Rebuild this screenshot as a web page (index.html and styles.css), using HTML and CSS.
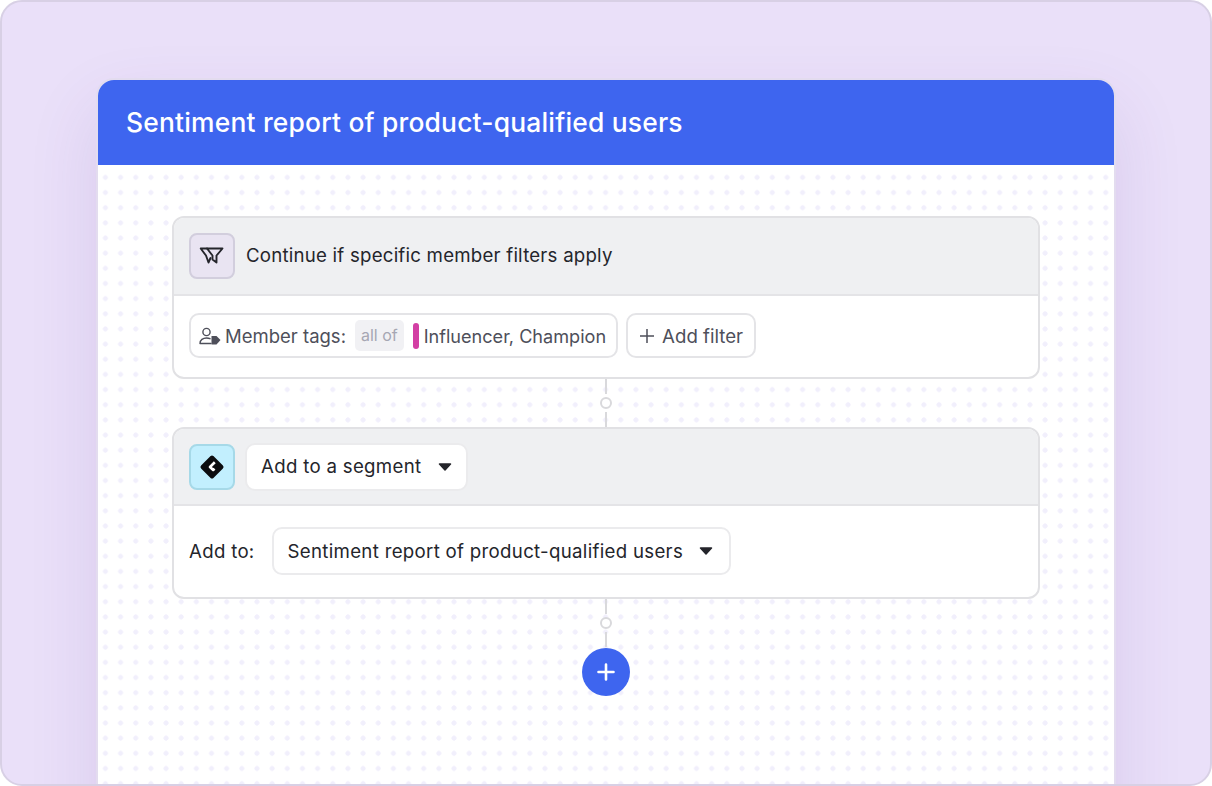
FILE: index.html
```html
<!DOCTYPE html>
<html lang="en">
<head>
<meta charset="utf-8">
<title>Sentiment report</title>
<link rel="stylesheet" href="styles.css">
</head>
<body>
<div class="frame">
  <div class="card">
    <div class="card-title">Sentiment report of product-qualified users</div>
    <div class="canvas">
      <section class="step">
        <div class="step-head">
          <span class="icon-box icon-filter">
            <svg width="26" height="20" viewBox="0 0 26 20" fill="none" stroke="#24252b" stroke-width="1.900" stroke-linejoin="round" stroke-linecap="round"><path d="M8 2.500H23.500L17.500 9.500V16.500L13.500 13.500V9.500Z"/><path d="M8 2.500H1.700L7 9.500L9.500 16.500L11.500 12"/></svg>
          </span>
          <span class="head-text">Continue if specific member filters apply</span>
        </div>
        <div class="step-body body-filter">
          <div class="pill pill-tags">
            <svg class="member-icon" width="22" height="20" viewBox="0 0 22 20" fill="none" stroke="#4e4f5a" stroke-width="1.400"><circle cx="7.500" cy="6" r="3.600"/><path d="M1 17.500C1 13.800 4 12 7.500 12C8.800 12 10 12.200 11 12.700M1 17.500H12" stroke-linecap="round"/><path d="M12.500 10H17.500L21.500 14L17.500 18.500H12.500Z" fill="#4e4f5a" stroke="none"/></svg>
            <span class="tags-label">Member tags:</span>
            <span class="all-of">all of</span>
            <span class="tag-bar"></span>
            <span class="tag-value">Influencer, Champion</span>
          </div>
          <div class="pill pill-add">
            <svg width="16" height="16" viewBox="0 0 16 16" stroke="#4e4f5a" stroke-width="1.500" fill="none"><path d="M8 1V15M1 8H15"/></svg>
            <span class="add-filter">Add filter</span>
          </div>
        </div>
      </section>
      <div class="connector"><span class="line"></span><span class="node"></span><span class="line"></span></div>
      <section class="step">
        <div class="step-head head-action">
          <span class="icon-box icon-segment">
            <svg width="26" height="26" viewBox="0 0 26 26"><path d="M13 3.500L22.500 13L13 22.500L3.500 13Z" fill="#0c0d10" stroke="#0c0d10" stroke-width="4" stroke-linejoin="round"/><path d="M15.800 8.300L11 13L14.200 16L15.500 14.700" fill="none" stroke="#fff" stroke-width="2.600" stroke-linejoin="round"/></svg>
          </span>
          <div class="select select-action">
            <span>Add to a segment</span>
            <svg class="caret" width="14" height="8" viewBox="0 0 14 8"><path d="M1.500 1H12.500L7 7Z" fill="#24252b" stroke="#24252b" stroke-width="1.500" stroke-linejoin="round"/></svg>
          </div>
        </div>
        <div class="step-body body-action">
          <span class="add-label">Add to:</span>
          <div class="select select-target">
            <span>Sentiment report of product-qualified users</span>
            <svg class="caret" width="14" height="8" viewBox="0 0 14 8"><path d="M1.500 1H12.500L7 7Z" fill="#24252b" stroke="#24252b" stroke-width="1.500" stroke-linejoin="round"/></svg>
          </div>
        </div>
      </section>
      <div class="connector connector-end"><span class="line"></span><span class="node"></span><span class="line"></span></div>
      <div class="add-btn">
        <svg width="18" height="18" viewBox="0 0 18 18" stroke="#fff" stroke-width="2.600" stroke-linecap="round"><path d="M9 1.500V16.500M1.500 9H16.500"/></svg>
      </div>
    </div>
  </div>
</div>
</body>
</html>
```
FILE: styles.css
```css
* { box-sizing: border-box; }
html, body { margin: 0; padding: 0; }
body {
  font-family: Inter, "Liberation Sans", sans-serif;
  background: #fff;
}
.frame {
  width: 1212px;
  height: 786px;
  overflow: hidden;
  background: #eae0f9;
  border: 2px solid #d8d0e5;
  border-radius: 22px;
  padding: 76px 94px 0 94px;
}
.card {
  width: 1020px;
  height: 760px;
  background: #fff;
  border: 2px solid #e3dcef;
  border-bottom: 0;
  border-radius: 18px 18px 0 0;
  box-shadow: 0 30px 70px rgba(90, 50, 150, .12);
  overflow: hidden;
}
.card-title {
  height: 85px;
  background: #3e65ef;
  color: #fff;
  font-size: 26.400px;
  font-weight: 550;
  letter-spacing: .2px;
  line-height: 85px;
  padding-left: 28px;
}
.canvas {
  height: 680px;
  padding: 51px 74px 0;
  display: flex;
  flex-direction: column;
  align-items: stretch;
  background-image: radial-gradient(circle, #f1effc 2.200px, transparent 2.800px);
  background-size: 15.160px 15.160px;
  background-position: -0.200px 4.800px;
  background-color: #fff;
}
.step {
  background: #fff;
  border: 2px solid #e1e1e4;
  border-radius: 12px;
  overflow: hidden;
}
.step-head {
  display: flex;
  align-items: center;
  gap: 11px;
  height: 78px;
  padding: 0 15px;
  background: #eff0f2;
  border-bottom: 2px solid #e4e4e7;
}
.icon-box {
  width: 46px;
  height: 46px;
  border-radius: 8px;
  display: flex;
  align-items: center;
  justify-content: center;
  flex: none;
}
.icon-filter { background: #e9e4f2; border: 2px solid #d2cedd; }
.icon-segment { background: #c2effe; border: 2px solid #a6d9e8; }
.head-text { font-size: 18.670px; letter-spacing: .22px; color: #24252b; padding-bottom: 2px; }
.step-body { display: flex; align-items: center; }
.body-filter { height: 81px; padding: 0 15px 2px; gap: 8px; }
.pill {
  display: flex;
  align-items: center;
  height: 45px;
  background: #fff;
  border: 2px solid #e4e4e7;
  border-radius: 10px;
  color: #4e4f5a;
  font-size: 18.500px;
}
.pill-tags { padding: 0 10px 0 8px; }
.member-icon { margin-right: 4px; }
.all-of {
  margin-left: 9px;
  background: #f1f1f4;
  color: #a6a7b3;
  font-size: 16px;
  height: 31px;
  line-height: 31px;
  padding: 0 6px;
  border-radius: 5px;
}
.tag-bar {
  width: 6px;
  height: 26px;
  border-radius: 3px;
  background: #d33fa4;
  margin: 0 5px 0 9px;
}
.tag-value { font-size: 18.100px; }
.pill-add { padding: 0 11px 0 11px; gap: 7px; }
.add-filter { font-size: 18.670px; padding-top: 1px; }
.head-action { height: 77px; gap: 10px; }
.select {
  display: flex;
  align-items: center;
  height: 48px;
  background: #fff;
  border: 2px solid #ebebed;
  border-radius: 10px;
  color: #24252b;
  font-size: 18.670px;
  letter-spacing: .3px;
  padding: 0 14px;
}
.select-target { padding-right: 16px; }
.caret { margin-left: 16px; flex: none; }
.select-action .caret { margin-left: 17px; }
.body-action { height: 91px; padding: 0 15px 1px; gap: 17px; }
.add-label { font-size: 18.670px; letter-spacing: .3px; color: #24252b; }
.connector {
  height: 48px;
  display: flex;
  flex-direction: column;
  align-items: center;
}
.connector-end { height: 49px; padding-bottom: 1px; }
.connector .line { width: 2px; flex: 1; background: #d9d9dc; }
.node {
  width: 12px;
  height: 12px;
  border: 2px solid #d9d9dc;
  border-radius: 50%;
  background: #fff;
  margin: 3px 0;
}
.add-btn {
  width: 48px;
  height: 48px;
  border-radius: 50%;
  background: #3e65ef;
  align-self: center;
  display: flex;
  align-items: center;
  justify-content: center;
  flex: none;
}
```
